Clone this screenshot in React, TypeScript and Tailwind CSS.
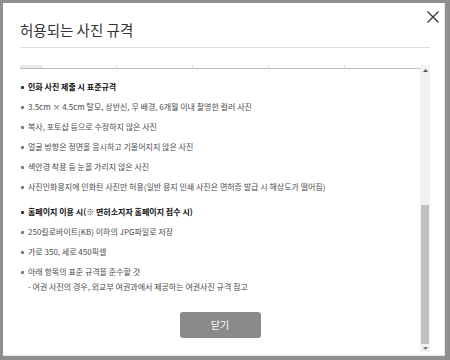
import React from "react";

const font = { fontFamily: '"Noto Sans CJK KR", "Noto Sans", sans-serif' };

function Item({ children, bold }: { children: React.ReactNode; bold?: boolean }) {
  return (
    <li className={`flex items-center h-[12px] leading-[12px] ${bold ? "font-bold text-[#111]" : "text-[#4a4a4a]"}`}>
      <span className={`inline-block w-[3px] h-[3px] rounded-[1px] ml-[1px] mr-[4px] ${bold ? "bg-[#333]" : "bg-[#777]"}`} />
      <span>{children}</span>
    </li>
  );
}

export default function App() {
  return (
    <div className="w-[450px] h-[360px] bg-[#8f8f8f] pt-[3px] pl-[3px] pr-[5px] pb-[4px]" style={font}>
      <div className="relative w-full h-full bg-white border-r border-b border-[#e6e6e6] flex flex-col pl-[17px] pr-[14px] pb-[3px]">
        <button className="absolute right-[4px] top-[7px] w-[14px] h-[14px] text-[#333]">
          <svg viewBox="0 0 14 14" width="14" height="14" fill="none" stroke="#333" strokeWidth="1.3">
            <path d="M1.5 1.5 L12.5 12.5 M12.5 1.5 L1.5 12.5" />
          </svg>
        </button>
        <div className="pt-[17px] pb-[7px] border-b border-[#dcdcdc]">
          <h1 className="text-[14.5px] leading-[20px] text-[#333]">허용되는 사진 규격</h1>
        </div>
        <div className="mt-[17px] flex-1 flex min-h-0">
          <div className="flex-1 overflow-hidden">
            <div className="grid grid-cols-[22px_75px_76px_76px_76px_1fr] h-[4px] border-b border-[#bdbdbd]">
              <div className="bg-[#e9e9e9] border-r border-[#ddd]" />
              <div className="border-r border-[#ddd]" />
              <div className="border-r border-[#ddd]" />
              <div className="border-r border-[#ddd]" />
              <div className="border-r border-[#ddd]" />
              <div />
            </div>
            <ul className="mt-[12px] text-[8px] flex flex-col gap-[8px]">
              <Item bold>인화 사진 제출 시 표준규격</Item>
              <Item>3.5cm × 4.5cm 탈모, 상반신, 무 배경, 6개월 이내 촬영한 컬러 사진</Item>
              <Item>복사, 포토샵 등으로 수정하지 않은 사진</Item>
              <Item>얼굴 방향은 정면을 응시하고 기울어지지 않은 사진</Item>
              <Item>색안경 착용 등 눈을 가리지 않은 사진</Item>
              <Item>사진인화용지에 인화된 사진만 허용(일반 용지 인쇄 사진은 면허증 발급 시 해상도가 떨어짐)</Item>
            </ul>
            <ul className="mt-[13px] text-[8px] flex flex-col gap-[8px]">
              <Item bold>홈페이지 이용 시(※ 면허소지자 홈페이지 접수 시)</Item>
              <Item>250킬로바이트(KB) 이하의 JPG파일로 저장</Item>
              <Item>가로 350, 세로 450픽셀</Item>
              <li className="text-[#4a4a4a]">
                <div className="flex items-center h-[12px] leading-[12px]">
                  <span className="inline-block w-[3px] h-[3px] rounded-[1px] ml-[1px] mr-[4px] bg-[#777]" />
                  <span>아래 항목의 표준 규격을 준수할 것</span>
                </div>
                <div className="h-[12px] leading-[12px] mt-[3px] pl-[8px]">- 여권 사진의 경우, 외교부 여권과에서 제공하는 여권사진 규격 참고</div>
              </li>
            </ul>
            <div className="mt-[19px] flex justify-center">
              <button className="w-[81px] h-[26px] rounded-[3px] bg-[#8a8a8a] text-white text-[10px] leading-[26px]">닫기</button>
            </div>
          </div>
          <div className="w-[10px] bg-[#f1f1f1] flex flex-col items-center">
            <div className="h-[10px] flex items-center justify-center">
              <svg width="5" height="3" viewBox="0 0 5 3"><path d="M2.5 0 L5 3 L0 3 Z" fill="#555" /></svg>
            </div>
            <div className="flex-1" />
            <div className="w-[8px] h-[139px] bg-[#c1c1c1]" />
            <div className="h-[8px] flex items-center justify-center">
              <svg width="5" height="3" viewBox="0 0 5 3"><path d="M0 0 L5 0 L2.5 3 Z" fill="#777" /></svg>
            </div>
          </div>
        </div>
      </div>
    </div>
  );
}
